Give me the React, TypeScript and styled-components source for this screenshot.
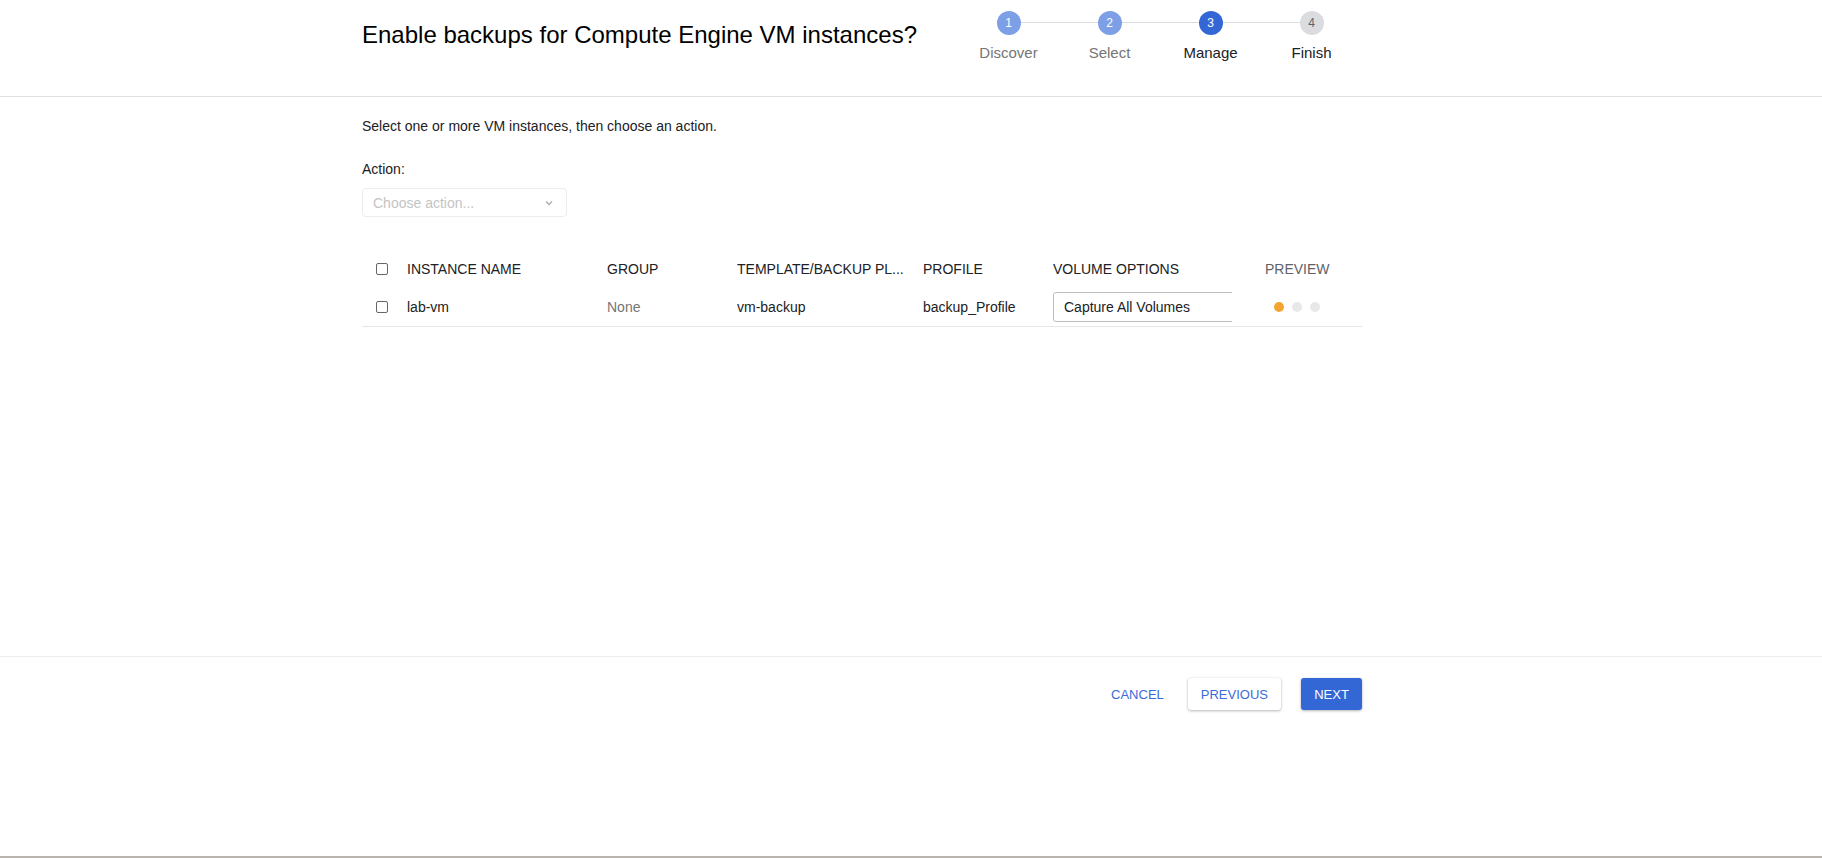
import React from "react";
import styled, { createGlobalStyle } from "styled-components";

const GlobalStyle = createGlobalStyle`
  html, body { margin: 0; padding: 0; background: #fff; }
  body { font-family: "Liberation Sans", Arial, sans-serif; color: #202124; }
  * { box-sizing: border-box; }
`;

const Page = styled.div`
  height: 858px;
  display: flex;
  flex-direction: column;
  border-bottom: 2px solid #b9b5ae;
`;

const Header = styled.header`
  height: 97px;
  flex: none;
  border-bottom: 1px solid #e0e0e0;
`;

const Inner = styled.div`
  width: 1000px;
  margin-left: 362px;
`;

const HeaderInner = styled(Inner)`
  display: flex;
  justify-content: space-between;
  align-items: flex-start;
`;

const Title = styled.h1`
  margin: 21px 0 0;
  font-size: 24px;
  line-height: 28px;
  font-weight: 400;
  color: #000;
`;

const Stepper = styled.ol`
  display: flex;
  margin: 0;
  padding: 0;
  list-style: none;
`;

const Step = styled.li<{ $last?: boolean }>`
  position: relative;
  width: 101px;
  padding-top: 11px;
  display: flex;
  flex-direction: column;
  align-items: center;
  &::after {
    content: "";
    display: ${(p) => (p.$last ? "none" : "block")};
    position: absolute;
    top: 22px;
    left: 50%;
    width: 101px;
    height: 1px;
    background: #dadce0;
  }
`;

const Circle = styled.span<{ $state: "done" | "active" | "todo" }>`
  position: relative;
  z-index: 1;
  width: 24px;
  height: 24px;
  border-radius: 50%;
  display: flex;
  align-items: center;
  justify-content: center;
  font-size: 12px;
  background: ${(p) =>
    p.$state === "done" ? "#7d9fe6" : p.$state === "active" ? "#3367d6" : "#dadce0"};
  color: ${(p) => (p.$state === "todo" ? "#5f6368" : "#fff")};
`;

const StepLabel = styled.span<{ $muted?: boolean }>`
  margin-top: 9px;
  font-size: 15px;
  line-height: 17px;
  color: ${(p) => (p.$muted ? "#757575" : "#202124")};
`;

const Main = styled.main`
  flex: 1;
`;

const MainInner = styled(Inner)`
  padding-top: 21px;
  display: flex;
  flex-direction: column;
`;

const Intro = styled.p`
  margin: 0;
  font-size: 14px;
  line-height: 16px;
  color: #202124;
`;

const FieldLabel = styled.label`
  margin-top: 27px;
  font-size: 14px;
  line-height: 16px;
  color: #202124;
`;

const ActionSelect = styled.div`
  margin-top: 11px;
  width: 205px;
  height: 29px;
  border: 1px solid #ececec;
  border-radius: 4px;
  display: flex;
  align-items: center;
  justify-content: space-between;
  padding: 0 12px 0 10px;
  font-size: 14px;
  color: #c4c4c4;
`;

const Table = styled.div`
  margin-top: 34px;
  display: flex;
  flex-direction: column;
`;

const Row = styled.div<{ $head?: boolean }>`
  display: grid;
  grid-template-columns: 45px 200px 130px 186px 130px 212px 97px;
  align-items: center;
  height: ${(p) => (p.$head ? "36px" : "40px")};
  border-bottom: ${(p) => (p.$head ? "none" : "1px solid #e6e6e6")};
  font-size: 14px;
  color: #202124;
`;

const Cell = styled.div<{ $muted?: boolean; $head?: boolean; $gray?: boolean }>`
  white-space: nowrap;
  overflow: hidden;
  padding-right: 10px;
  color: ${(p) => (p.$muted ? "#757575" : p.$gray ? "#5f6368" : "#202124")};
  text-transform: ${(p) => (p.$head ? "uppercase" : "none")};
`;

const CheckCell = styled.div`
  padding-left: 14px;
  display: flex;
  align-items: center;
`;

const Checkbox = styled.span`
  width: 12px;
  height: 12px;
  border: 1.5px solid #666;
  border-radius: 2px;
  display: block;
`;

const VolumeCell = styled.div`
  overflow: hidden;
  width: 179px;
`;

const VolumeSelect = styled.div`
  width: 200px;
  height: 30px;
  border: 1px solid #bdbdbd;
  border-radius: 3px;
  display: flex;
  align-items: center;
  padding-left: 10px;
  font-size: 14px;
  color: #202124;
  background: #fff;
`;

const PreviewCell = styled.div`
  width: 64px;
  display: flex;
  justify-content: center;
  gap: 8px;
`;

const Dot = styled.span<{ $on?: boolean }>`
  width: 10px;
  height: 10px;
  border-radius: 50%;
  background: ${(p) => (p.$on ? "#f2a532" : "#e8e8e8")};
`;

const Footer = styled.footer`
  height: 200px;
  flex: none;
  border-top: 1px solid #ececec;
`;

const FooterInner = styled(Inner)`
  padding-top: 21px;
  display: flex;
  justify-content: flex-end;
  align-items: center;
  gap: 20px;
`;

const Button = styled.button<{ $variant: "text" | "outline" | "primary" }>`
  font-family: "Liberation Sans", Arial, sans-serif;
  font-size: 13px;
  height: 32px;
  border-radius: 3px;
  cursor: pointer;
  text-transform: uppercase;
  border: none;
  padding: ${(p) => (p.$variant === "text" ? "0 0" : p.$variant === "outline" ? "0 13px" : "0 12px")};
  margin-right: ${(p) => (p.$variant === "text" ? "4px" : "0")};
  min-width: ${(p) => (p.$variant === "outline" ? "93px" : p.$variant === "primary" ? "61px" : "0")};
  color: ${(p) => (p.$variant === "primary" ? "#fff" : "#3b6bd9")};
  background: ${(p) => (p.$variant === "primary" ? "#3367d6" : p.$variant === "outline" ? "#fff" : "transparent")};
  box-shadow: ${(p) =>
    p.$variant === "text" ? "none" : "0 1px 3px rgba(0,0,0,0.28), 0 0 1px rgba(0,0,0,0.12)"};
`;

const Chevron = () => (
  <svg width="10" height="10" viewBox="0 0 10 10" fill="none">
    <path d="M2 3.5 L5 6.5 L8 3.5" stroke="#b0b0b0" strokeWidth="1.5" />
  </svg>
);

const steps = [
  { n: 1, label: "Discover", state: "done" as const },
  { n: 2, label: "Select", state: "done" as const },
  { n: 3, label: "Manage", state: "active" as const },
  { n: 4, label: "Finish", state: "todo" as const },
];

export default function App() {
  return (
    <>
      <GlobalStyle />
      <Page>
        <Header>
          <HeaderInner>
            <Title>Enable backups for Compute Engine VM instances?</Title>
            <Stepper>
              {steps.map((s, i) => (
                <Step key={s.n} $last={i === steps.length - 1}>
                  <Circle $state={s.state}>{s.n}</Circle>
                  <StepLabel $muted={s.state === "done"}>{s.label}</StepLabel>
                </Step>
              ))}
            </Stepper>
          </HeaderInner>
        </Header>
        <Main>
          <MainInner>
            <Intro>Select one or more VM instances, then choose an action.</Intro>
            <FieldLabel>Action:</FieldLabel>
            <ActionSelect>
              <span>Choose action...</span>
              <Chevron />
            </ActionSelect>
            <Table>
              <Row $head>
                <CheckCell>
                  <Checkbox />
                </CheckCell>
                <Cell $head>Instance Name</Cell>
                <Cell $head>Group</Cell>
                <Cell $head>Template/Backup Pl...</Cell>
                <Cell $head>Profile</Cell>
                <Cell $head>Volume Options</Cell>
                <Cell $head $gray>Preview</Cell>
              </Row>
              <Row>
                <CheckCell>
                  <Checkbox />
                </CheckCell>
                <Cell>lab-vm</Cell>
                <Cell $muted>None</Cell>
                <Cell>vm-backup</Cell>
                <Cell>backup_Profile</Cell>
                <VolumeCell>
                  <VolumeSelect>Capture All Volumes</VolumeSelect>
                </VolumeCell>
                <PreviewCell>
                  <Dot $on />
                  <Dot />
                  <Dot />
                </PreviewCell>
              </Row>
            </Table>
          </MainInner>
        </Main>
        <Footer>
          <FooterInner>
            <Button $variant="text">Cancel</Button>
            <Button $variant="outline">Previous</Button>
            <Button $variant="primary">Next</Button>
          </FooterInner>
        </Footer>
      </Page>
    </>
  );
}
